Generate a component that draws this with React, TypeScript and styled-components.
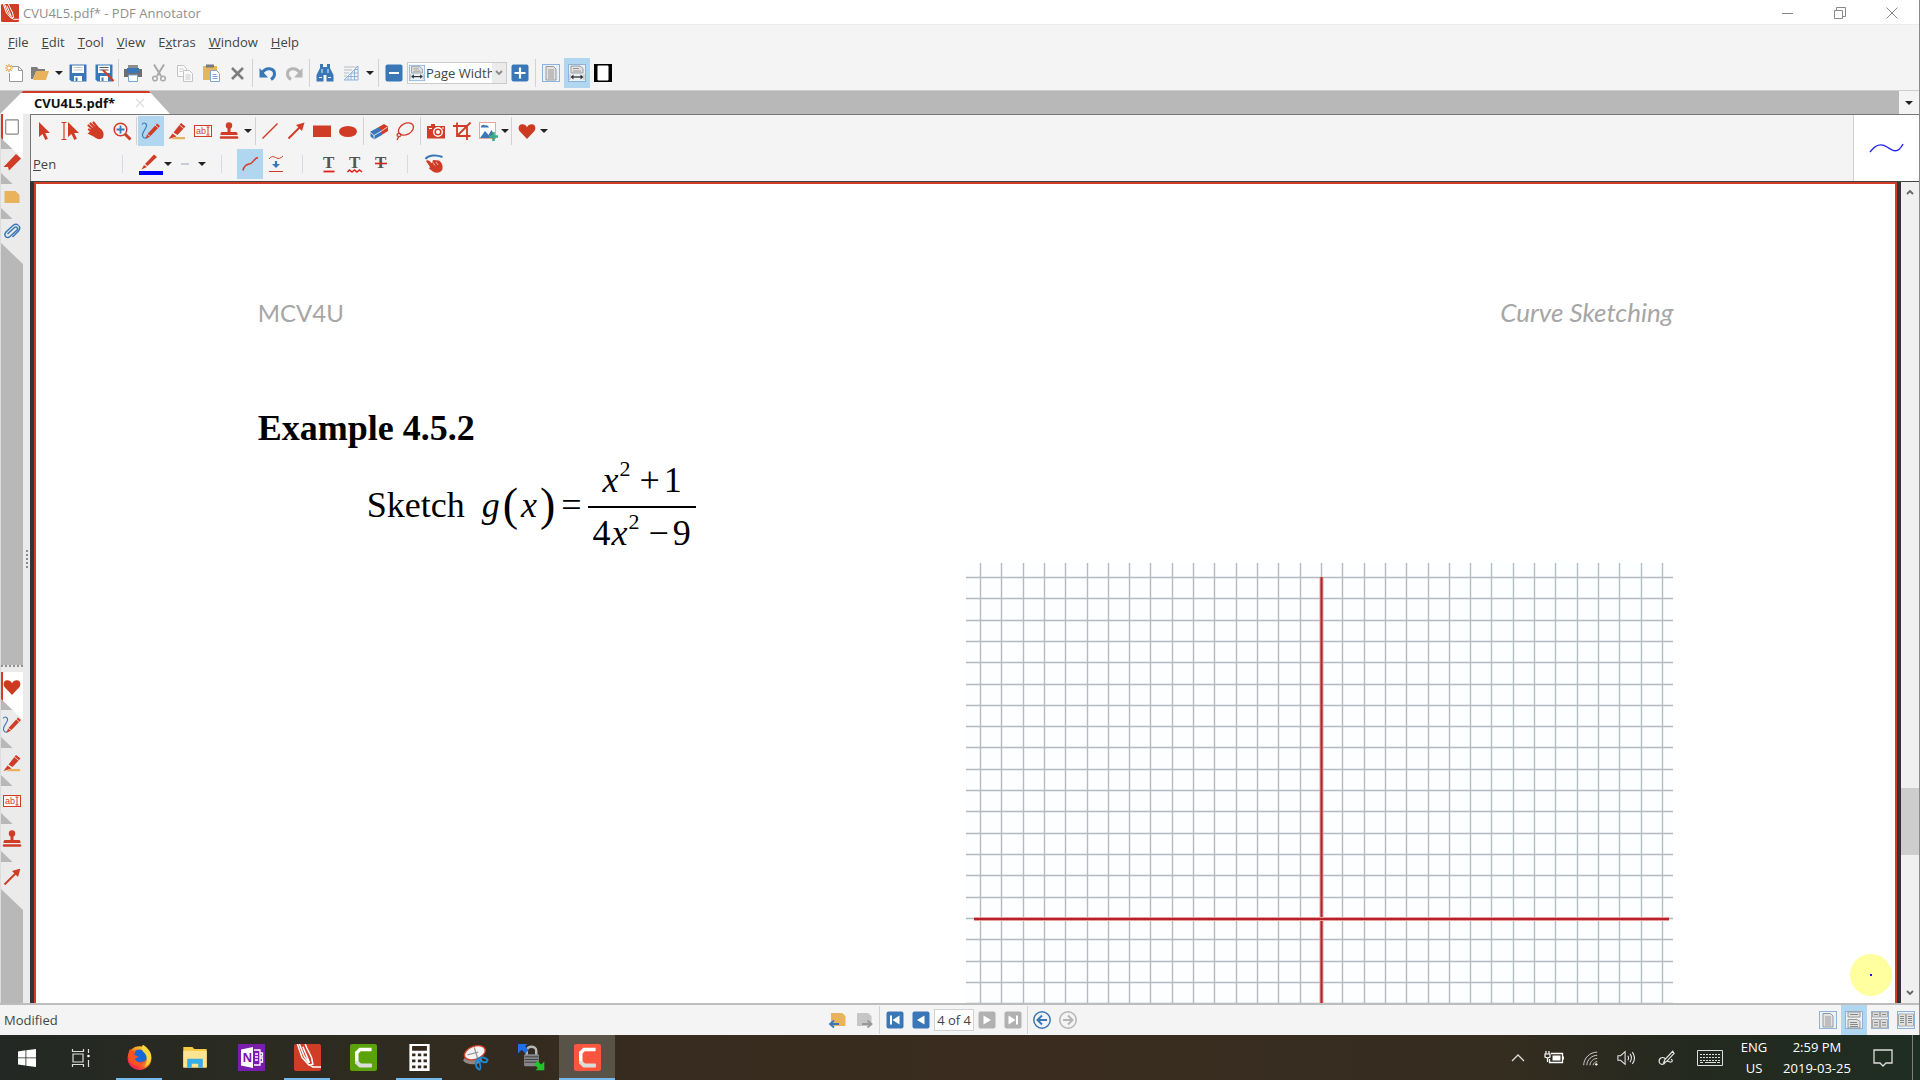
import React from "react";
import styled, { createGlobalStyle, css } from "styled-components";

const RED = "#d13c27";
const BLUE = "#3a77b7";
const ORANGE = "#e9b35c";
const GREY = "#a9a9a9";
const UI_FONT = `"Open Sans", "Noto Sans", sans-serif`;

const GlobalStyle = createGlobalStyle`
  * { box-sizing: border-box; }
  body { margin: 0; background: #f4f4f4; overflow: hidden; }
  button, input, select { font: inherit; color: inherit; }
`;

const Desktop = styled.div`
  display: flex;
  flex-direction: column;
  height: 100vh;
  font: 13px/18px ${UI_FONT};
  color: #444;
  background: #f4f4f4;
`;

/* ---------- window chrome ---------- */

const AppWindow = styled.div`
  flex: 1;
  min-height: 0;
  display: flex;
  flex-direction: column;
  border-right: 1px solid #8a8a8a;
`;

const TitleBar = styled.header`
  display: flex;
  align-items: center;
  height: 25px;
  padding: 1px 1px 0;
  background: #fff;
  border-bottom: 1px solid #ececec;
  color: #8f8f8f;
`;

const Title = styled.h1`
  flex: 1;
  margin: 0 0 0 4px;
  font-size: 13px;
  line-height: 18px;
  font-weight: 400;
`;

const CaptionButton = styled.button`
  display: grid;
  place-items: center;
  width: 52px;
  height: 24px;
  padding: 0;
  border: 0;
  background: none;
`;

const MenuBar = styled.nav`
  display: flex;
  align-items: center;
  height: 33px;
  padding: 0 2px;
`;

const MenuItem = styled.button`
  padding: 0 7px 0 6px;
  border: 0;
  background: none;
  font-size: 13px;
  line-height: 24px;
`;

const Toolbar = styled.div`
  display: flex;
  align-items: center;
  height: 32px;
  padding: 0 0 2px 1px;
`;

const ToolButton = styled.button<{ $active?: boolean }>`
  display: grid;
  place-items: center;
  flex: none;
  width: 26px;
  height: 30px;
  padding: 0;
  border: 0;
  background: ${(p) => (p.$active ? "#b1d6f0" : "none")};
`;

const CaretButton = styled.button<{ $tight?: boolean }>`
  display: grid;
  place-items: center;
  flex: none;
  width: ${(p) => (p.$tight ? 8 : 12)}px;
  height: 30px;
  padding: 0;
  border: 0;
  background: none;

  &::before {
    content: "";
    border: 4px solid transparent;
    border-top-color: #222;
    border-bottom: 0;
  }
`;

const Divider = styled.span<{ $gap?: number }>`
  flex: none;
  width: 1px;
  height: 28px;
  margin: 0 ${(p) => p.$gap ?? 2}px;
  background: #d2d2d2;
`;

const ShortDivider = styled(Divider)`
  height: 18px;
  background: #d5d9e4;
`;

const ZoomBox = styled.label`
  display: flex;
  align-items: center;
  flex: none;
  width: 100px;
  height: 22px;
  border: 1px solid #cbcbcb;
  background: #fff;
`;

const ZoomSelect = styled.select`
  appearance: none;
  flex: 1;
  min-width: 0;
  padding: 0;
  border: 0;
  background: none;
  font-size: 13px;
`;

const ZoomArrow = styled.span`
  display: grid;
  place-items: center;
  width: 14px;
  height: 20px;
  background: #ebebeb;
`;

/* ---------- document tabs ---------- */

const TabStrip = styled.div`
  display: flex;
  justify-content: space-between;
  height: 24px;
  background: #b8b8b8;
  border-top: 1px solid #cdcdcd;
`;

const DocTab = styled.div`
  display: flex;
  align-items: center;
  gap: 18px;
  width: 170px;
  padding: 0 23px 1px 34px;
  clip-path: polygon(0 100%, 23px 0, 149px 0, 100% 100%);
  background: #fff;
  border-top: 2px solid ${RED};
  color: #111;
  font-size: 13px;
  font-weight: 700;
`;

const TabClose = styled.button`
  display: grid;
  place-items: center;
  width: 16px;
  height: 16px;
  padding: 0;
  border: 0;
  background: none;
`;

const TabList = styled.div`
  display: flex;
  align-items: center;
  background: #f4f4f4;
  padding: 0 4px;
`;

/* ---------- body ---------- */

const Body = styled.div`
  flex: 1;
  min-height: 0;
  display: flex;
`;

const SideBar = styled.aside`
  display: flex;
  flex-direction: column;
  width: 23px;
  background: #b8b8b8;
  border-left: 1px solid #dcdcdc;
`;

const SideGroup = styled.div<{ $grow?: boolean }>`
  display: flex;
  flex-direction: column;
  ${(p) => (p.$grow ? "flex: 1; min-height: 0;" : "flex: 0 0 331px;")}
`;

const SideGrip = styled.div`
  height: 7px;
  background: #ebebeb;
  border-top: 2px dotted #8f8f8f;
  border-bottom: 3px solid #ebebeb;
`;

const SideTab = styled.button<{ $order: number; $tall?: boolean; $active?: boolean }>`
  position: relative;
  z-index: ${(p) => 10 - p.$order};
  display: grid;
  place-items: center;
  flex: none;
  width: 22px;
  height: ${(p) => (p.$tall ? 38 : 35)}px;
  padding: 0 1px 9px 0;
  border: 0;
  background: none;

  &::before {
    content: "";
    position: absolute;
    z-index: -1;
    inset: 0 0 -10px;
    background: ${(p) => (p.$active ? "#fff" : "#ebebeb")};
    border-left: ${(p) => (p.$active ? `2px solid ${RED}` : "0")};
    clip-path: polygon(0 0, 100% 0, 100% 100%, 0 calc(100% - 21px));
  }
`;

const Splitter = styled.div`
  display: grid;
  place-items: center;
  width: 7px;
  background: #ebebeb;
`;

const SplitterDots = styled.span`
  width: 2px;
  height: 18px;
  border-left: 2px dotted #8a8a8a;
`;

const Workspace = styled.main`
  flex: 1;
  min-width: 0;
  display: flex;
  flex-direction: column;
`;

const ToolPanel = styled.div`
  display: flex;
  border: solid #777;
  border-width: 1px 0 0 1px;
`;

const ToolRows = styled.div`
  flex: 1;
`;

const ToolRow = styled.div`
  display: flex;
  align-items: center;
  height: 33px;
  padding-bottom: 1px;
`;

const ToolName = styled.span`
  width: 76px;
  padding-left: 2px;
`;

const Preview = styled.div`
  display: grid;
  place-items: center;
  width: 66px;
  background: #fff;
  border-left: 1px solid #cfcfcf;
`;

const Viewer = styled.div`
  flex: 1;
  min-height: 0;
  display: flex;
  border-top: 1px solid #444;
`;

const PageFrame = styled.div`
  position: relative;
  flex: 1;
  min-width: 0;
  display: flex;
  background: #333639;
  padding: 0 4px;
`;

const Page = styled.article`
  flex: 1;
  min-width: 0;
  overflow: hidden;
  padding: 113px 11.9% 0;
  background: #fff;
  border: solid ${RED};
  border-width: 2px 2px 0;
  color: #000;
  font-family: "Liberation Serif", serif;
`;

const PageHeader = styled.div`
  display: flex;
  justify-content: space-between;
  align-items: baseline;
  height: 30px;
  color: #a6a6a6;
  font: 24px/30px Lato, sans-serif;

  em { font-size: 26px; }
`;

const Heading = styled.h2`
  margin: 79px 0 0;
  font-size: 36px;
  line-height: 44px;
`;

const Exercise = styled.div`
  display: flex;
  align-items: center;
  height: 106px;
  margin-top: 2px;
  padding-left: 109px;
  font-size: 36px;
  line-height: 50px;
`;

const Formula = styled.span`
  display: flex;
  align-items: center;
  margin-left: 16px;

  i { margin: 0 1px; }
`;

const Paren = styled.span`
  margin: 0 2px;
  font-size: 46px;
  line-height: 50px;
`;

const Equals = styled.span`
  margin: 0 6px 0 4px;
`;

const Fraction = styled.span`
  display: flex;
  flex-direction: column;
  width: 108px;
  text-align: center;
`;

const Term = styled.span<{ $over?: boolean }>`
  display: block;
  height: ${(p) => (p.$over ? 56 : 50)}px;
  line-height: ${(p) => (p.$over ? 56 : 50)}px;
  white-space: nowrap;
  ${(p) => p.$over && css`border-bottom: 2px solid #000;`}

  sup {
    font-size: 22px;
    line-height: 0;
    vertical-align: 16px;
  }
`;

const Operator = styled.span`
  margin: 0 4px 0 9px;
`;

const GraphPaper = styled.svg`
  display: block;
  margin: 5px 0 0 auto;
`;

const PointerHalo = styled.span`
  position: absolute;
  right: 9px;
  bottom: 7px;
  display: grid;
  place-items: center;
  width: 42px;
  height: 42px;
  border-radius: 50%;
  background: #ffffa0;

  &::before {
    content: "";
    width: 2px;
    height: 2px;
    background: #1a1ae0;
  }
`;

const ScrollBar = styled.div`
  display: flex;
  flex-direction: column;
  width: 18px;
  background: #f0f0f0;
`;

const ScrollButton = styled.button`
  display: grid;
  place-items: center;
  height: 20px;
  padding: 0;
  border: 0;
  background: none;
`;

const ScrollTrack = styled.div`
  flex: 1;
  display: flex;
  flex-direction: column;
  justify-content: flex-end;
  padding-bottom: 128px;
`;

const ScrollThumb = styled.div`
  height: 67px;
  background: #cdcdcd;
`;

const StatusBar = styled.footer`
  display: flex;
  align-items: center;
  height: 32px;
  border-top: 2px solid #bdbdbd;
`;

const StatusText = styled.span`
  flex: 0 0 43%;
  padding-left: 4px;
`;

const StatusTools = styled.div<{ $grow?: boolean }>`
  display: flex;
  align-items: center;
  ${(p) => p.$grow && "flex: 1;"}
`;

const PageInput = styled.input`
  width: 40px;
  height: 22px;
  padding: 0;
  border: 1px solid #d3d3d3;
  background: #fff;
  font-size: 13px;
  text-align: center;
`;

/* ---------- taskbar ---------- */

const TaskBar = styled.nav`
  display: flex;
  align-items: stretch;
  height: 45px;
  padding-right: 4px;
  background: linear-gradient(90deg, #232824, #2b2b21 14%, #372b1f 32%, #3a2d20 55%, #352d20 78%, #24291f 88%, #1f2e22);
  color: #fff;
`;

const SystemButtons = styled.div`
  display: flex;
  padding-right: 3px;
`;

const TaskButton = styled.button<{ $running?: boolean; $focused?: boolean; $system?: boolean }>`
  display: grid;
  place-items: center;
  flex: none;
  width: ${(p) => (p.$system ? 54 : 56)}px;
  padding: 0;
  border: 0;
  background-color: ${(p) => (p.$focused ? "#585346" : "transparent")};
  ${(p) =>
    (p.$running || p.$focused) &&
    css`
      background-image: linear-gradient(#76b9ed, #76b9ed);
      background-repeat: no-repeat;
      background-position: bottom center;
      background-size: ${p.$focused ? "100%" : "46px"} 2px;
    `}
`;

const Tray = styled.div`
  display: flex;
  align-items: center;
  margin-left: auto;
`;

const TrayButton = styled.button<{ $w: number }>`
  display: grid;
  place-items: center;
  width: ${(p) => p.$w}px;
  height: 45px;
  padding: 0;
  border: 0;
  background: none;
  font-size: 13px;
  line-height: 21px;
`;

const ShowDesktop = styled.span`
  width: 1px;
  height: 45px;
  background: #7b807a;
`;

/* ---------- icons ---------- */

type IconProps = { size?: number; children: React.ReactNode };
const Icon = ({ size = 20, children }: IconProps) => (
  <svg width={size} height={size} viewBox="0 0 20 20" fill="none" aria-hidden="true">
    {children}
  </svg>
);

const PdfLogo = ({ size = 19 }: { size?: number }) => (
  <Icon size={size}>
    <rect width="20" height="20" rx="1.500" fill={RED} />
    <path d="M2.500 0 6 10l5 5.500L14 15 13 10 9.500 3 8.300 0M4 0l3.500 9 3.500 5M6.500 2 9.500 9l2 5M11.500 15.500 14 17h6" stroke="#fff" strokeWidth="1.100" />
  </Icon>
);

const NewIcon = () => (
  <Icon>
    <path d="M8 3.500h6.500l4 4V18.500H5.500V10" stroke="#999" fill="#fff" />
    <path d="M14.500 3.500v4h4" stroke="#999" />
    <path d="M5 1v8M1 5h8M2.200 2.200l5.600 5.600M7.800 2.200 2.200 7.800" stroke="#e8a33d" strokeWidth="1.200" />
    <circle cx="5" cy="5" r="1.500" fill="#fff" />
  </Icon>
);
const OpenIcon = () => (
  <Icon>
    <path d="M1 4h6l1.500 2H15v3H6l-3 7H1Z" fill="#7d7d7d" />
    <path d="M6 8h13l-3 9H3Z" fill={ORANGE} />
  </Icon>
);
const SaveIcon = ({ pen }: { pen?: boolean }) => (
  <Icon>
    <path d="M1.500 1.500h17v17h-15l-2-2Z" fill={BLUE} />
    <path d="M4 2.500h12V10H4Z" fill="#fff" />
    <path d="M5.500 4.500h9M5.500 7h9" stroke={pen ? "#555" : "#c8c8c8"} />
    <path d="M6 13h8v5H6Z" fill="#fff" />
    <path d="M7.500 14.500h2V18h-2Z" fill={BLUE} />
    {pen && <path d="m9 7 10.500 11" stroke={RED} strokeWidth="2" />}
  </Icon>
);
const PrintIcon = () => (
  <Icon>
    <path d="M5 2h10v3H5Z" fill="#8d8d8d" />
    <path d="M1 6h18v8H1Z" fill="#6e6e6e" />
    <path d="M4 5h12v5H4Z" fill={BLUE} />
    <path d="M5.500 12h9v6.500h-9Z" fill="#fff" stroke="#7ba7d4" />
  </Icon>
);
const CutIcon = () => (
  <Icon>
    <path d="M5 1.500 12 13M15 1.500 8 13" stroke={GREY} strokeWidth="2" />
    <circle cx="6" cy="15.500" r="2.300" stroke={GREY} strokeWidth="1.500" />
    <circle cx="14" cy="15.500" r="2.300" stroke={GREY} strokeWidth="1.500" />
  </Icon>
);
const CopyIcon = () => (
  <Icon>
    <path d="M2.500 2.500h6l3 3v8h-9Z" stroke="#c4c4c4" fill="#fafafa" />
    <path d="M8.500 7.500h6l3 3v8h-9Z" stroke="#c4c4c4" fill="#fafafa" />
    <path d="M4.500 6h4M4.500 8.500h3M10.500 12h5M10.500 14h5M10.500 16h5" stroke="#c9c9c9" />
  </Icon>
);
const PasteIcon = () => (
  <Icon>
    <path d="M2 3h14v14H2Z" fill={ORANGE} />
    <path d="M5 1.500h8v3H5Z" fill="#777" />
    <path d="M9.500 7.500h6l3 3v8h-9Z" stroke="#7ba7d4" fill="#fff" />
    <path d="M11.500 11.500h4M11.500 13.500h5M11.500 15.500h5" stroke="#7ba7d4" />
  </Icon>
);
const DeleteIcon = () => (
  <Icon><path d="m5 5 11 11M16 5 5 16" stroke="#7d7d7d" strokeWidth="2.600" /></Icon>
);
const UndoIcon = ({ redo }: { redo?: boolean }) => (
  <Icon>
    <g transform={redo ? "translate(20 0) scale(-1 1)" : undefined}>
      <path d="M4 10C8 3.500 16.500 5 16.500 11c0 2-1 4-3.500 5.500" stroke={redo ? "#b5b5b5" : BLUE} strokeWidth="3" />
      <path d="M1.500 5v9.500h8.500Z" fill={redo ? "#b5b5b5" : BLUE} />
    </g>
  </Icon>
);
const FindIcon = () => (
  <Icon>
    <path d="M5 1h3v3h4V1h3v4l3.500 7v6.500h-7v-6.500H8.500v6.500h-7v-6.500L5 5Z" fill={BLUE} />
    <path d="M7 6v4M13 6v4M4 14.500h3M13 14.500h3" stroke="#fff" strokeWidth=".9" />
  </Icon>
);
const HatchIcon = () => (
  <Icon>
    <path d="M3 4h13M3 7h8M3 10h5M3 13h3" stroke="#b9bec4" />
    <path d="M17 3v14H3Z" stroke="#8db3dc" />
    <path d="M13.500 6.500V17M10 10v7M7 13v4M6.500 13.500H17M10 10h7M13 6.500h4" stroke="#8db3dc" />
  </Icon>
);
const SquareIcon = ({ sign, off }: { sign: string; off?: boolean }) => (
  <Icon>
    <rect x="1.500" y="1.500" width="17" height="17" rx="2" fill={off ? "#b1b1b1" : BLUE} />
    {sign === "minus" && <path d="M5 10h10" stroke="#fff" strokeWidth="2" />}
    {sign === "plus" && <path d="M4.500 10h11M10 4.500v11" stroke="#fff" strokeWidth="2.200" />}
    {sign === "first" && <path d="M5 5.500h2v9H5ZM14.500 5.500v9L7.500 10Z" fill="#fff" />}
    {sign === "prev" && <path d="M13.500 5.500v9L6 10Z" fill="#fff" />}
    {sign === "next" && <path d="M6.500 5.500v9L14 10Z" fill="#fff" />}
    {sign === "last" && <path d="M13 5.500h2v9h-2ZM5.500 5.500v9l7-4.500Z" fill="#fff" />}
  </Icon>
);
const PageIcon = ({ kind, size }: { kind: string; size?: number }) => (
  <Icon size={size}>
    <rect x="1.500" y="1.500" width="17" height="17" fill="#eaf1f8" stroke="#8db3dc" />
    {kind === "full" && (
      <>
        <path d="M5 3.500h7.500L15 6v11H5Z" fill="#e2e2e2" stroke="#999" />
        <path d="M7 7h6M7 9h6M7 11h6M7 13h6M7 15h6" stroke="#999" />
      </>
    )}
    {kind === "width" && (
      <>
        <path d="M4 3h9l3 2.500V10H4Z" fill="#e2e2e2" stroke="#999" />
        <path d="M6 5.500h6M6 8h8" stroke="#999" />
        <path d="M3 11v6M17 11v6" stroke="#bbb" />
        <path d="M5 14h10" stroke="#333" strokeWidth="1.300" />
        <path d="m3.500 14 3-2.500v5ZM16.500 14l-3-2.500v5Z" fill="#333" />
      </>
    )}
    {kind === "scroll" && (
      <>
        <path d="M4 2v5h12V2ZM4 18V9.500h9l3 2V18Z" fill="#e2e2e2" stroke="#999" />
        <path d="M6 4.500h8M6 12.500h7M6 14.500h8M6 16.500h8" stroke="#888" />
      </>
    )}
    {kind === "grid" && (
      <>
        <path d="M2.500 2v5h7V2ZM10.500 2v5h7V2ZM2.500 18V9.500h7V18ZM10.500 18V9.500h7V18Z" fill="#dcdcdc" stroke="#aaa" />
        <path d="M4 4.500h4M12 4.500h4M4 12.500h4M4 15h4M12 12.500h4M12 15h4" stroke="#888" />
      </>
    )}
    {kind === "double" && (
      <>
        <path d="M2.500 4v12h7V4ZM10.500 4v12h7V4Z" fill="#e2e2e2" stroke="#aaa" />
        <path d="M4 6.500h4M4 8.500h4M4 10.500h4M4 12.500h4M12 6.500h4M12 8.500h4M12 10.500h4M12 12.500h4" stroke="#888" />
      </>
    )}
  </Icon>
);
const BlackPageIcon = () => (
  <Icon>
    <rect x="1" y="1" width="18" height="18" fill="#000" />
    <rect x="4.500" y="2.500" width="11" height="15" rx="1" fill="#fff" />
  </Icon>
);

const ArrowCursorPath = "M0 0v15l3.500-3 2.800 6 2.600-1.200L6.200 11H11Z";
const SelectIcon = () => <Icon><path d={ArrowCursorPath} transform="translate(5 1)" fill={RED} /></Icon>;
const TextSelectIcon = () => (
  <Icon>
    <path d={ArrowCursorPath} transform="translate(8 1)" fill={RED} />
    <path d="M1.500 1.500h5M1.500 18.500h5M4 1.500v17" stroke={RED} strokeWidth="1.200" />
  </Icon>
);
const HandIcon = () => (
  <Icon>
    <path d="M2.500 4.500 6.500 8M4.500 2.500 9 7M7.500 1.500l4 5M3 8.500l5 4" stroke={RED} strokeWidth="2.200" strokeLinecap="round" />
    <path d="M5 7.500 11 5l4 3c3 3 3 6 2 8.500-2 2.500-6 2-8.500-.5L1.500 12.500 3.500 11Z" fill={RED} />
  </Icon>
);
const ZoomIcon = () => (
  <Icon>
    <circle cx="8.500" cy="8.500" r="6.300" stroke={RED} strokeWidth="1.500" />
    <path d="m13 13 5.500 5.500" stroke={RED} strokeWidth="3" />
    <path d="M4.500 8.500h8M8.500 4.500v8" stroke={BLUE} strokeWidth="1.800" />
  </Icon>
);
const PenIcon = () => (
  <Icon>
    <path d="M1 3.500C2.500 1 6 2 5.500 5 5 8 1.500 10.500 1.500 14c0 3 2 3.500 4.500 2.500" stroke={BLUE} strokeWidth="1.100" />
    <path d="M6.500 13 16 2.500l3 2.500L9.500 15Z" fill={RED} />
    <path d="m6 13.500 3 2.200-4.500 2Z" fill={RED} />
    <path d="m14 4 3 2.600" stroke="#f4f4f4" strokeWidth=".8" />
  </Icon>
);
const MarkerIcon = () => (
  <Icon>
    <path d="M6.500 11.500 14 2l4.500 3.500L10.500 14Z" fill={RED} />
    <path d="m5.500 12.500 4 3L1.500 18Z" fill={RED} />
    <path d="m12.500 4 4.300 3.500" stroke="#f4f4f4" strokeWidth=".8" />
    <path d="M8 16h10v2.200H4Z" fill={ORANGE} />
  </Icon>
);
const TextBoxIcon = () => (
  <svg width="20" height="20" viewBox="0 0 20 20" aria-hidden="true">
    <rect x="1.500" y="4.500" width="17" height="11" fill="#fff" stroke={RED} />
    <text x="3" y="13" fontSize="9" fontFamily="Liberation Sans, sans-serif" fill={RED}>ab</text>
    <path d="M13.500 6h3M15 6v8M13.500 14h3" stroke={RED} fill="none" />
  </svg>
);
const StampIcon = () => (
  <Icon>
    <circle cx="10" cy="4.500" r="3.200" fill={RED} />
    <path d="M8.500 7h3v4h6l1 1.500V14H1.500v-1.500l1-1.500h6Z" fill={RED} />
    <path d="M2 16.500h16" stroke={RED} strokeWidth="2.600" strokeLinecap="round" />
  </Icon>
);
const LineIcon = () => <Icon><path d="M2.500 17.500 17.500 2.500" stroke={RED} strokeWidth="1.500" /></Icon>;
const ArrowIcon = () => (
  <Icon>
    <path d="M2.500 17.500 14 6" stroke={RED} strokeWidth="2" />
    <path d="M18.500 1.500 16 10l-6-6Z" fill={RED} />
  </Icon>
);
const RectIcon = () => <Icon><rect x="1" y="4.500" width="18" height="11.500" fill={RED} /></Icon>;
const EllipseIcon = () => <Icon><ellipse cx="10" cy="10.500" rx="9" ry="5.500" fill={RED} /></Icon>;
const EraserIcon = () => (
  <Icon>
    <path d="M9 6.500 15 3l4 2.500v4.500l-6.500 4Z" fill={RED} />
    <path d="M1.500 10.500 9 6.500l4 3V14l-8 4.500-3.500-3Z" fill={BLUE} />
    <path d="m1.500 11.500 3.500 3 7.500-4.500 6-4M5 14.500v4" stroke="#fff" strokeWidth=".8" />
  </Icon>
);
const LassoIcon = () => (
  <Icon>
    <ellipse cx="11" cy="8" rx="8" ry="5.500" transform="rotate(-28 11 8)" stroke={RED} strokeWidth="1.400" />
    <path d="M4 12c-3 1-2 4 .500 3.500S6 12 3 12.500M4 15l-2 4" stroke={RED} strokeWidth="1.300" />
  </Icon>
);
const CameraIcon = () => (
  <Icon>
    <path d="M1 5h4V3h4v2h10v12.500H1Z" fill={RED} />
    <circle cx="12" cy="11" r="4.300" stroke="#fff" strokeWidth="1.400" />
    <circle cx="12" cy="11" r="2" fill="#fff" />
    <path d="M3 7.500h3M16 7h2" stroke="#fff" />
  </Icon>
);
const CropIcon = () => (
  <Icon><path d="M5 1.500V15h13.500M1 5h14v14M18.500 1.500 5 15" stroke={RED} strokeWidth="1.800" /></Icon>
);
const ImageIcon = () => (
  <Icon>
    <rect x="1.500" y="1.500" width="16" height="16" fill="#fff" stroke="#e8a79c" />
    <path d="M3 6c0-2 3-3 4-1.500 2-.500 3 0 4 2H3Z" fill={BLUE} />
    <path d="m2 17 5-7 3.500 4 3-5 3.500 6v2Z" fill={BLUE} />
    <path d="M11 15.500h9M15.500 11v9" stroke="#3fa980" strokeWidth="2.600" />
  </Icon>
);
const HeartIcon = () => (
  <Icon><path d="M10 18 3 10.500C.500 7.500 1.500 3.500 5 3.200c2.300-.2 4 1 5 3 1-2 2.700-3.200 5-3 3.500.3 4.500 4.300 2 7.300Z" fill="#cc3a22" /></Icon>
);
const InkColorIcon = () => (
  <svg width="24" height="24" viewBox="0 0 24 24" aria-hidden="true">
    <path d="M6 12 15 2.500 18 5 8.500 14Z" fill={RED} />
    <path d="M5 13 8 15 2.500 17.500Z" fill={RED} />
    <path d="M0 19h24v4H0Z" fill="#00f" />
  </svg>
);
const DashIcon = () => <Icon><path d="M6 10h8" stroke="#b5bcc6" strokeWidth="1.400" /></Icon>;
const CurveIcon = () => <Icon><path d="M3 16.500c1-4.500 3-6 6-6.500 5-.5 4-5.500 9-6.500" stroke={RED} strokeWidth="1.500" /></Icon>;
const PressureIcon = () => (
  <Icon>
    <path d="M3 5c3-4 5.500-2 7.500-1s4 .500 6.500-2M3 17.500h14" stroke={RED} />
    <path d="M10 7v3" stroke={BLUE} strokeWidth="2.200" />
    <path d="M6 10h8l-4 4Z" fill={BLUE} />
  </Icon>
);
const TextMarkIcon = ({ kind }: { kind: string }) => (
  <Icon>
    <text x="4" y="14" fontSize="17" fontWeight="700" fontFamily="Liberation Serif, serif" fill="#555">T</text>
    {kind === "under" && <path d="M4.500 17.500h11" stroke="#e0201c" strokeWidth="1.800" />}
    {kind === "wave" && <path d="m2.500 18 2-2 2.500 2 2.500-2 2.500 2 2.500-2 2.500 2" stroke="#e0201c" strokeWidth="1.500" />}
    {kind === "strike" && <path d="M4 9.500h12" stroke="#e0201c" strokeWidth="1.600" />}
  </Icon>
);
const TouchIcon = () => (
  <Icon>
    <path d="M1.500 5C4.500 1 12 .500 18.500 3" stroke={BLUE} strokeWidth="2" />
    <path d="M2 7c1-1.500 3-.500 4 .5l2 2L9 6l6 .500c3 2 4 5 3.500 8.500-1.500 4-6 4.500-9 3L5 14.500l1-1.500Z" fill={RED} />
    <path d="m9 8.500 2 3M12 8l2 3" stroke="#f4f4f4" strokeWidth=".7" />
  </Icon>
);

const ThumbPageIcon = () => (
  <Icon size={18}><rect x="3" y="2" width="14" height="16" rx="1" fill="#fff" stroke="#888" strokeWidth="1.300" /></Icon>
);
const BookmarkIcon = () => <Icon><path d="M1.500 15 14 2l5 4.500L7 18.500l-1-3.500Z" fill={RED} /></Icon>;
const NoteIcon = () => <Icon><path d="M2.500 4h11l4 4v8h-15Z" fill={ORANGE} /></Icon>;
const ClipIcon = () => (
  <Icon>
    <path d="m5.500 12 7-6.500c2-1.500 4 .500 2.500 2.500l-7 6.500c-3 2.500-7-.500-4-4.500l7-6.500c4-3 9 .500 5.500 5.500l-6 6" stroke={BLUE} strokeWidth="1.500" />
  </Icon>
);

const HistoryIcon = ({ off }: { off?: boolean }) => (
  <Icon>
    <path d="M3 3h11l3.500 3v10H3Z" fill={off ? "#c6c6c6" : ORANGE} />
    {off
      ? <path d="M8 14h9M13.500 10.500 17.500 14l-4 3.500" stroke="#999" strokeWidth="1.800" />
      : <path d="M11 14H2.500M6 10.500 2 14l4 3.500" stroke={BLUE} strokeWidth="1.800" />}
  </Icon>
);
const RoundArrowIcon = ({ off }: { off?: boolean }) => (
  <Icon>
    <g transform={off ? "translate(20 0) scale(-1 1)" : undefined} stroke={off ? "#b5b5b5" : BLUE}>
      <circle cx="10" cy="10" r="8.200" strokeWidth="1.500" />
      <path d="M15 10H6M10 5.500 5.500 10l4.500 4.500" strokeWidth="2" />
    </g>
  </Icon>
);

const StartIcon = () => (
  <Icon><path d="m1 3.500 7.500-1.200v7.200H1ZM9.300 2.200 19 1v8.500H9.300ZM1 10.300h7.500v7.200L1 16.500ZM9.300 10.300H19V19L9.300 17.700Z" fill="#fff" /></Icon>
);
const TaskViewIcon = () => (
  <Icon>
    <path d="M1.500 1v2.500h11V1M1.500 19v-2.500h11V19M2 6h10v8H2ZM17.500 1v4M17.500 12v7" stroke="#ddd" strokeWidth="1.200" />
    <circle cx="17.500" cy="8" r="1.300" fill="#fff" />
  </Icon>
);
const FirefoxIcon = () => (
  <Icon size={27}>
    <defs>
      <linearGradient id="flame" x1="1" y1="0" x2="0" y2="1">
        <stop offset="0" stopColor="#fff04a" />
        <stop offset=".4" stopColor="#ff9a1b" />
        <stop offset=".75" stopColor="#f5353f" />
        <stop offset="1" stopColor="#e31587" />
      </linearGradient>
    </defs>
    <circle cx="10" cy="10.500" r="8.800" fill="url(#flame)" />
    <circle cx="10" cy="9.500" r="5.500" fill="#1667d9" />
    <path d="M3 3.500c1 2 3 1.500 4.500 1.500L6 8l3.500 1.500L6.500 11c1.500 3.500 6 3 8 .500-1 5-9 6-12 1C1.500 9 1.500 6 3 3.500Z" fill="#f7541f" />
    <path d="M12.500.500c4 2.500 7 6 6 11-1 3-3 5-5 5.500C17 13 15.500 8 13 6c-1.500-1.500-1.500-4-.5-5.500Z" fill="#ffd93b" />
  </Icon>
);
const FolderIcon = () => (
  <Icon size={26}>
    <path d="M1 1.500h7L9.500 3H19v14H1Z" fill="#f6c945" />
    <path d="M1 4.500h18v13H1Z" fill="#fde492" />
    <path d="M4 10.500h12v7h-3.500v-3h-5v3H4Z" fill="#35aee8" />
  </Icon>
);
const OneNoteIcon = () => (
  <svg width="27" height="27" viewBox="0 0 27 27" aria-hidden="true">
    <rect width="27" height="27" fill="#7a1cae" />
    <path d="M3 5.500 15 3v21L3 21.500Z" fill="#fff" />
    <text x="4.500" y="18" fontSize="12" fontWeight="700" fontFamily="Open Sans, sans-serif" fill="#7a1cae">N</text>
    <path d="M16 6h6v15h-6M17 10h3M17 13h3M17 16h3M22 9h2.500v3H22M22 14h2.500v4H22" stroke="#fff" strokeWidth="1.300" fill="none" />
  </svg>
);
const CamtasiaIcon = ({ tone }: { tone: string }) => (
  <Icon size={27}>
    <rect width="20" height="20" rx="1.500" fill={tone} />
    <path d="M16 4H7.500L5 6.500v7L7.500 16H16" stroke="#fff" strokeWidth="2.600" />
    <path d="M5 12.500v1L7.500 16H16" stroke="#dcdcdc" strokeWidth="2.600" />
  </Icon>
);
const CalculatorIcon = () => (
  <Icon size={27}>
    <path d="M2.500 0h15v20h-15Z" fill="#fff" />
    <path d="M4.500 1.500h11v3.500h-11Z" fill="#33291e" />
    <path d="M4.500 8h2.500M8.800 8h2.500M13 8h2.500M4.500 12.500h2.500M8.800 12.500h2.500M13 12.500h2.500M4.500 17h2.500M8.800 17h2.500M13 17h2.500" stroke="#33291e" strokeWidth="2" />
  </Icon>
);
const SnipIcon = () => (
  <Icon size={27}>
    <ellipse cx="8" cy="12" rx="7" ry="3" fill="#8c8884" />
    <ellipse cx="9.500" cy="6.500" rx="8" ry="4.800" transform="rotate(-20 9.500 6.500)" fill="#f4f4f4" stroke={RED} />
    <path d="M9 2.500 12 12M4 8l8-2" stroke="#999" />
    <path d="M12 11c-3 1-2 7 1 8 2-1 0-5-1-8Zm0 0c2-2 6-1 7 1-1 3-5 1-7-1Z" stroke="#1f87d2" strokeWidth="1.400" />
  </Icon>
);
const LockIcon = () => (
  <Icon size={27}>
    <path d="M6.500 9V5c0-4 7-4 7 0v4" stroke="#b8b8b8" strokeWidth="1.800" />
    <rect x="4.500" y="7.500" width="11" height="9" rx="1" fill="#85878a" />
    <path d="M5 9.500h10M5 11.500h10M5 13.500h10" stroke="#3c3c3c" strokeWidth=".7" />
    <path d="M0 0h7L5.300 1.800 8 4.500 5.500 7 2.800 4.300 0 7Z" fill="#1f6fe8" />
    <path d="M19.500 19.500h-6.500l1.700-1.700L12 15l2.500-2.500 2.700 2.700 2.300-2.200Z" fill="#22c32b" />
  </Icon>
);

const TrayIcons: Record<string, React.ReactNode> = {
  up: <path d="m4 13 6-6 6 6" stroke="#ddd" strokeWidth="1.300" />,
  battery: (
    <>
      <path d="M7 5.500h11.500v9H5.500V11" stroke="#fff" strokeWidth="1.300" />
      <path d="M8.500 7.500h8v5h-8ZM18.500 8.500H20v3h-1.500Z" fill="#fff" />
      <path d="M2 3v3M5 3v3M1 6h5v3L3.500 10 1 9ZM3.500 10v4" stroke="#fff" strokeWidth="1.200" />
    </>
  ),
  wifi: (
    <>
      <path d="M3 18C3 10 10 3.500 18 3.500M6.500 18C6.500 12 12 7 18 7M10 18c0-4 4-7.500 8-7.500M13.500 18c0-2 2.500-4 4.500-4" stroke="#ccc" strokeWidth="1.100" />
      <circle cx="17" cy="17" r="1.300" fill="#fff" />
    </>
  ),
  volume: (
    <path d="M1 7.500h3L9 3v14l-5-4.500H1ZM12 7.500c1 1.500 1 3.500 0 5M14.500 5.500c2 2.500 2 6.500 0 9M17 3.500c3 4 3 9 0 13" stroke="#e4e4e4" strokeWidth="1.200" />
  ),
  ink: (
    <path d="M17.500 2.500 8.500 12l-1 3 3-1 8.500-9ZM9 10.500c-3-2.500-7.500 0-6.500 4s5.500 3 7 0c2-3 4 .500 6 0s2-2.500 0-3" stroke="#e4e4e4" strokeWidth="1.300" />
  ),
};

const AppMenu = ({ label, at = 0 }: { label: string; at?: number }) => (
  <MenuItem>
    {label.slice(0, at)}
    <u>{label[at]}</u>
    {label.slice(at + 1)}
  </MenuItem>
);

const range = (n: number) => Array.from({ length: n }, (_, i) => i);
const CELL = 21.31;
const gridLine = (i: number) => Math.round(14 + i * CELL) + 0.5;

const Graph = () => (
  <GraphPaper width="707" height="456" viewBox="0 0 707 456" role="img" aria-label="Blank coordinate grid">
    <rect width="707" height="456" fill="#fdfeff" />
    <g stroke="#b4babf" strokeWidth="1.400">
      {range(33).map((i) => (
        <path key={i} d={`M${gridLine(i)} 0V456`} stroke={i > 22 ? "#adc0c4" : undefined} />
      ))}
      {range(21).map((i) => (
        <path key={i} d={`M0 ${gridLine(i)}H707`} />
      ))}
    </g>
    <path d="M355.500 14V456" stroke="#e0a29c" strokeWidth="4" />
    <path d="M355.500 14V456" stroke="#ad2430" strokeWidth="2" />
    <path d="M8 356H703" stroke="#e8a09c" strokeWidth="4" />
    <path d="M8 356H703" stroke="#b8202c" strokeWidth="2" />
  </GraphPaper>
);

export default function App() {
  return (
    <Desktop>
      <GlobalStyle />
      <AppWindow>
        <TitleBar>
          <PdfLogo size={18} />
          <Title>CVU4L5.pdf* - PDF Annotator</Title>
          <CaptionButton aria-label="Minimize">
            <svg width="12" height="12" viewBox="0 0 12 12"><path d="M0 6.500h11" stroke="#888" /></svg>
          </CaptionButton>
          <CaptionButton aria-label="Restore">
            <svg width="12" height="12" viewBox="0 0 12 12" fill="none" stroke="#888"><path d="M.5 3.500h8v8h-8ZM2.500 3.500v-3h9v9h-3" /></svg>
          </CaptionButton>
          <CaptionButton aria-label="Close">
            <svg width="12" height="12" viewBox="0 0 12 12" stroke="#888"><path d="m.5.5 11 11M11.500.5l-11 11" /></svg>
          </CaptionButton>
        </TitleBar>

        <MenuBar aria-label="Main menu">
          <AppMenu label="File" />
          <AppMenu label="Edit" />
          <AppMenu label="Tool" />
          <AppMenu label="View" />
          <AppMenu label="Extras" at={1} />
          <AppMenu label="Window" />
          <AppMenu label="Help" />
        </MenuBar>

        <Toolbar>
          <ToolButton aria-label="New"><NewIcon /></ToolButton>
          <ToolButton aria-label="Open"><OpenIcon /></ToolButton>
          <CaretButton aria-label="Recent files" />
          <ToolButton aria-label="Save"><SaveIcon /></ToolButton>
          <ToolButton aria-label="Save as"><SaveIcon pen /></ToolButton>
          <Divider $gap={1} />
          <ToolButton aria-label="Print"><PrintIcon /></ToolButton>
          <ToolButton aria-label="Cut"><CutIcon /></ToolButton>
          <ToolButton aria-label="Copy"><CopyIcon /></ToolButton>
          <ToolButton aria-label="Paste"><PasteIcon /></ToolButton>
          <ToolButton aria-label="Delete"><DeleteIcon /></ToolButton>
          <Divider />
          <ToolButton aria-label="Undo"><UndoIcon /></ToolButton>
          <ToolButton aria-label="Redo"><UndoIcon redo /></ToolButton>
          <Divider />
          <ToolButton aria-label="Find"><FindIcon /></ToolButton>
          <ToolButton aria-label="Page background"><HatchIcon /></ToolButton>
          <CaretButton aria-label="Background options" />
          <Divider />
          <ToolButton aria-label="Zoom out"><SquareIcon sign="minus" /></ToolButton>
          <ZoomBox>
            <PageIcon kind="width" size={18} />
            <ZoomSelect aria-label="Zoom"><option>Page Width</option></ZoomSelect>
            <ZoomArrow>
              <svg width="8" height="6" viewBox="0 0 8 6" fill="none"><path d="m1 1 3 3 3-3" stroke="#888" strokeWidth="1.800" /></svg>
            </ZoomArrow>
          </ZoomBox>
          <ToolButton aria-label="Zoom in"><SquareIcon sign="plus" /></ToolButton>
          <Divider />
          <ToolButton aria-label="Fit page"><PageIcon kind="full" /></ToolButton>
          <ToolButton aria-label="Fit width" $active><PageIcon kind="width" /></ToolButton>
          <ToolButton aria-label="Full screen"><BlackPageIcon /></ToolButton>
        </Toolbar>

        <TabStrip>
          <DocTab>
            <span>CVU4L5.pdf*</span>
            <TabClose aria-label="Close document">
              <svg width="10" height="10" viewBox="0 0 10 10"><path d="m1 1 8 8M9 1 1 9" stroke="#ddd" strokeWidth="1.200" /></svg>
            </TabClose>
          </DocTab>
          <TabList><CaretButton aria-label="Open documents" /></TabList>
        </TabStrip>

        <Body>
          <SideBar>
            <SideGroup $grow>
              <SideTab $order={0} $active aria-label="Pages"><ThumbPageIcon /></SideTab>
              <SideTab $order={1} aria-label="Bookmarks"><BookmarkIcon /></SideTab>
              <SideTab $order={2} aria-label="Annotations"><NoteIcon /></SideTab>
              <SideTab $order={3} aria-label="Attachments"><ClipIcon /></SideTab>
            </SideGroup>
            <SideGrip />
            <SideGroup>
              <SideTab $tall $order={0} $active aria-label="Favorites"><HeartIcon /></SideTab>
              <SideTab $tall $order={1} aria-label="Pens"><PenIcon /></SideTab>
              <SideTab $tall $order={2} aria-label="Markers"><MarkerIcon /></SideTab>
              <SideTab $tall $order={3} aria-label="Text boxes"><TextBoxIcon /></SideTab>
              <SideTab $tall $order={4} aria-label="Stamps"><StampIcon /></SideTab>
              <SideTab $tall $order={5} aria-label="Arrows"><ArrowIcon /></SideTab>
            </SideGroup>
          </SideBar>
          <Splitter><SplitterDots /></Splitter>

          <Workspace>
            <ToolPanel>
              <ToolRows>
                <ToolRow>
                  <ToolButton aria-label="Select"><SelectIcon /></ToolButton>
                  <ToolButton aria-label="Select text"><TextSelectIcon /></ToolButton>
                  <ToolButton aria-label="Pan"><HandIcon /></ToolButton>
                  <ToolButton aria-label="Zoom"><ZoomIcon /></ToolButton>
                  <Divider $gap={1} />
                  <ToolButton aria-label="Pen" $active><PenIcon /></ToolButton>
                  <ToolButton aria-label="Marker"><MarkerIcon /></ToolButton>
                  <ToolButton aria-label="Text"><TextBoxIcon /></ToolButton>
                  <ToolButton aria-label="Stamp"><StampIcon /></ToolButton>
                  <CaretButton aria-label="Stamp options" />
                  <Divider $gap={1} />
                  <ToolButton aria-label="Line"><LineIcon /></ToolButton>
                  <ToolButton aria-label="Arrow"><ArrowIcon /></ToolButton>
                  <ToolButton aria-label="Rectangle"><RectIcon /></ToolButton>
                  <ToolButton aria-label="Ellipse"><EllipseIcon /></ToolButton>
                  <Divider />
                  <ToolButton aria-label="Eraser"><EraserIcon /></ToolButton>
                  <ToolButton aria-label="Lasso"><LassoIcon /></ToolButton>
                  <Divider />
                  <ToolButton aria-label="Snapshot"><CameraIcon /></ToolButton>
                  <ToolButton aria-label="Crop"><CropIcon /></ToolButton>
                  <ToolButton aria-label="Insert image"><ImageIcon /></ToolButton>
                  <CaretButton $tight aria-label="Image options" />
                  <Divider />
                  <ToolButton aria-label="Favorites"><HeartIcon /></ToolButton>
                  <CaretButton $tight aria-label="Favorite options" />
                </ToolRow>
                <ToolRow>
                  <ToolName><u>P</u>en</ToolName>
                  <ShortDivider $gap={15} />
                  <ToolButton aria-label="Pen color"><InkColorIcon /></ToolButton>
                  <CaretButton $tight aria-label="Color options" />
                  <ToolButton aria-label="Line width"><DashIcon /></ToolButton>
                  <CaretButton $tight aria-label="Width options" />
                  <ShortDivider $gap={15} />
                  <ToolButton aria-label="Smooth strokes" $active><CurveIcon /></ToolButton>
                  <ToolButton aria-label="Pressure"><PressureIcon /></ToolButton>
                  <ShortDivider $gap={13} />
                  <ToolButton aria-label="Underline text"><TextMarkIcon kind="under" /></ToolButton>
                  <ToolButton aria-label="Squiggly text"><TextMarkIcon kind="wave" /></ToolButton>
                  <ToolButton aria-label="Strike out text"><TextMarkIcon kind="strike" /></ToolButton>
                  <ShortDivider $gap={13} />
                  <ToolButton aria-label="Touch mode"><TouchIcon /></ToolButton>
                </ToolRow>
              </ToolRows>
              <Preview>
                <svg width="36" height="12" viewBox="0 0 36 12" fill="none"><path d="M1 10C7 2 12 1 18 5s11 7 16-3" stroke="#2323f5" strokeWidth="1.400" /></svg>
              </Preview>
            </ToolPanel>

            <Viewer>
              <PageFrame>
                <Page>
                  <PageHeader>
                    <span>MCV4U</span>
                    <em>Curve Sketching</em>
                  </PageHeader>
                  <Heading>Example 4.5.2</Heading>
                  <Exercise>
                    Sketch
                    <Formula>
                      <i>g</i>
                      <Paren>(</Paren>
                      <i>x</i>
                      <Paren>)</Paren>
                      <Equals>=</Equals>
                      <Fraction>
                        <Term $over><i>x</i><sup>2</sup><Operator>+</Operator>1</Term>
                        <Term>4<i>x</i><sup>2</sup><Operator>−</Operator>9</Term>
                      </Fraction>
                    </Formula>
                  </Exercise>
                  <Graph />
                </Page>
                <PointerHalo />
              </PageFrame>
              <ScrollBar>
                <ScrollButton aria-label="Scroll up">
                  <svg width="8" height="6" viewBox="0 0 8 6" fill="none"><path d="m1 5 3-3 3 3" stroke="#666" strokeWidth="1.800" /></svg>
                </ScrollButton>
                <ScrollTrack><ScrollThumb /></ScrollTrack>
                <ScrollButton aria-label="Scroll down">
                  <svg width="8" height="6" viewBox="0 0 8 6" fill="none"><path d="m1 1 3 3 3-3" stroke="#666" strokeWidth="1.800" /></svg>
                </ScrollButton>
              </ScrollBar>
            </Viewer>
          </Workspace>
        </Body>

        <StatusBar>
          <StatusText>Modified</StatusText>
          <StatusTools $grow>
            <ToolButton aria-label="Previous annotation"><HistoryIcon /></ToolButton>
            <ToolButton aria-label="Next annotation"><HistoryIcon off /></ToolButton>
            <Divider />
            <ToolButton aria-label="First page"><SquareIcon sign="first" /></ToolButton>
            <ToolButton aria-label="Previous page"><SquareIcon sign="prev" /></ToolButton>
            <PageInput aria-label="Page" defaultValue="4 of 4" />
            <ToolButton aria-label="Next page"><SquareIcon sign="next" off /></ToolButton>
            <ToolButton aria-label="Last page"><SquareIcon sign="last" off /></ToolButton>
            <Divider $gap={1} />
            <ToolButton aria-label="Back"><RoundArrowIcon /></ToolButton>
            <ToolButton aria-label="Forward"><RoundArrowIcon off /></ToolButton>
          </StatusTools>
          <StatusTools>
            <ToolButton aria-label="Single page"><PageIcon kind="full" /></ToolButton>
            <ToolButton aria-label="Continuous" $active><PageIcon kind="scroll" /></ToolButton>
            <ToolButton aria-label="Two pages continuous"><PageIcon kind="grid" /></ToolButton>
            <ToolButton aria-label="Two pages"><PageIcon kind="double" /></ToolButton>
          </StatusTools>
        </StatusBar>
      </AppWindow>

      <TaskBar aria-label="Taskbar">
        <SystemButtons>
          <TaskButton $system aria-label="Start"><StartIcon /></TaskButton>
          <TaskButton $system aria-label="Task view"><TaskViewIcon /></TaskButton>
        </SystemButtons>
        <TaskButton aria-label="Firefox" $running><FirefoxIcon /></TaskButton>
        <TaskButton aria-label="File Explorer"><FolderIcon /></TaskButton>
        <TaskButton aria-label="OneNote"><OneNoteIcon /></TaskButton>
        <TaskButton aria-label="PDF Annotator" $running><PdfLogo size={27} /></TaskButton>
        <TaskButton aria-label="Camtasia"><CamtasiaIcon tone="#5aa30b" /></TaskButton>
        <TaskButton aria-label="Calculator" $running><CalculatorIcon /></TaskButton>
        <TaskButton aria-label="Snipping Tool"><SnipIcon /></TaskButton>
        <TaskButton aria-label="Secure sync"><LockIcon /></TaskButton>
        <TaskButton aria-label="Camtasia Recorder" $focused><CamtasiaIcon tone="#f9553f" /></TaskButton>
        <Tray>
          <TrayButton $w={36} aria-label="Hidden icons"><Icon>{TrayIcons.up}</Icon></TrayButton>
          <TrayButton $w={36} aria-label="Battery"><Icon>{TrayIcons.battery}</Icon></TrayButton>
          <TrayButton $w={36} aria-label="Network"><Icon size={18}>{TrayIcons.wifi}</Icon></TrayButton>
          <TrayButton $w={36} aria-label="Volume"><Icon size={18}>{TrayIcons.volume}</Icon></TrayButton>
          <TrayButton $w={44} aria-label="Ink workspace"><Icon size={18}>{TrayIcons.ink}</Icon></TrayButton>
          <TrayButton $w={44} aria-label="Touch keyboard">
            <svg width="26" height="16" viewBox="0 0 26 16" fill="none" stroke="#ddd">
              <path d="M.5.500h25v15H.5Z" />
              <path d="M3 4.500h20M3 7.500h20M3 10.500h20" strokeDasharray="2 1" />
              <path d="M3 12.500h3M8 12.500h11M20 12.500h3" />
            </svg>
          </TrayButton>
          <TrayButton $w={44}><span>ENG<br />US</span></TrayButton>
          <TrayButton $w={82}><span>2:59 PM<br />2019-03-25</span></TrayButton>
          <TrayButton $w={50} aria-label="Notifications">
            <svg width="20" height="20" viewBox="0 0 20 20" fill="none"><path d="M1 2h18v13h-6l-3 3-3-3H1Z" stroke="#ddd" strokeWidth="1.300" /></svg>
          </TrayButton>
          <TrayButton $w={8} aria-label="Show desktop"><ShowDesktop /></TrayButton>
        </Tray>
      </TaskBar>
    </Desktop>
  );
}
